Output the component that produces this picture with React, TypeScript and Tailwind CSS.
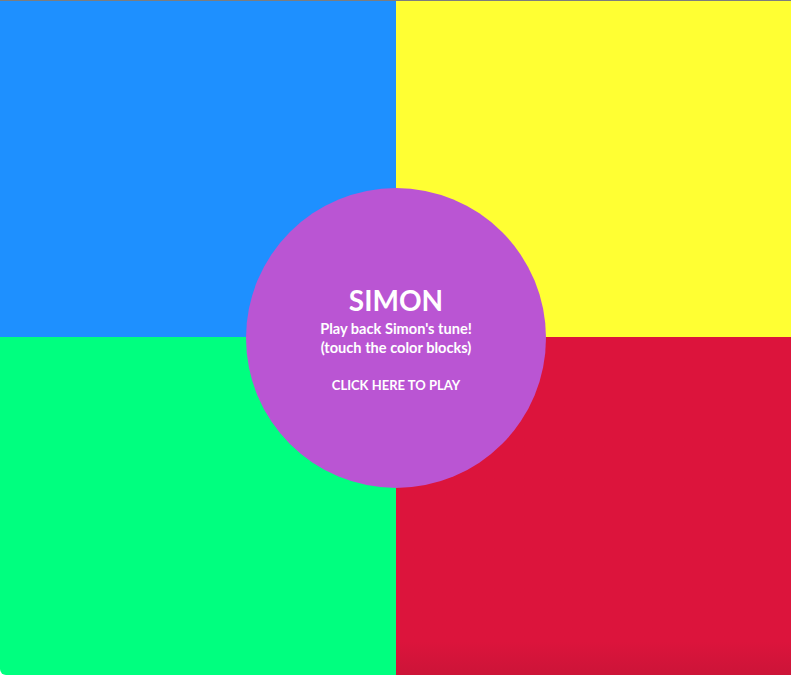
export default function App() {
  return (
    <div className="relative h-[675px] w-[791px] overflow-hidden border-t border-[#7d7d7d] bg-white" style={{ fontFamily: "Lato, 'Open Sans', sans-serif" }}>
      <div className="grid h-[674px] grid-cols-[396px_395px] grid-rows-[336px_338px]">
        <div className="bg-[#1e90ff]" />
        <div className="bg-[#ffff33]" />
        <div className="rounded-bl-[6px] bg-[#00ff7f]" />
        <div className="bg-gradient-to-b from-[#dc143c] from-[90%] to-[#cc1438]" />
      </div>
      <div className="absolute left-[246px] top-[187px] flex h-[300px] w-[300px] flex-col items-center justify-center rounded-full bg-[#ba55d3] text-white">
        <div className="mt-[2px] text-[28px] font-bold leading-[34px]">SIMON</div>
        <div className="mt-[2px] text-[14.6px] font-bold leading-[19px]">Play back Simon's tune!</div>
        <div className="text-[14.6px] font-bold leading-[19px]">(touch the color blocks)</div>
        <div className="mt-[19px] text-[13px] font-bold leading-[19px]">CLICK HERE TO PLAY</div>
      </div>
    </div>
  );
}
